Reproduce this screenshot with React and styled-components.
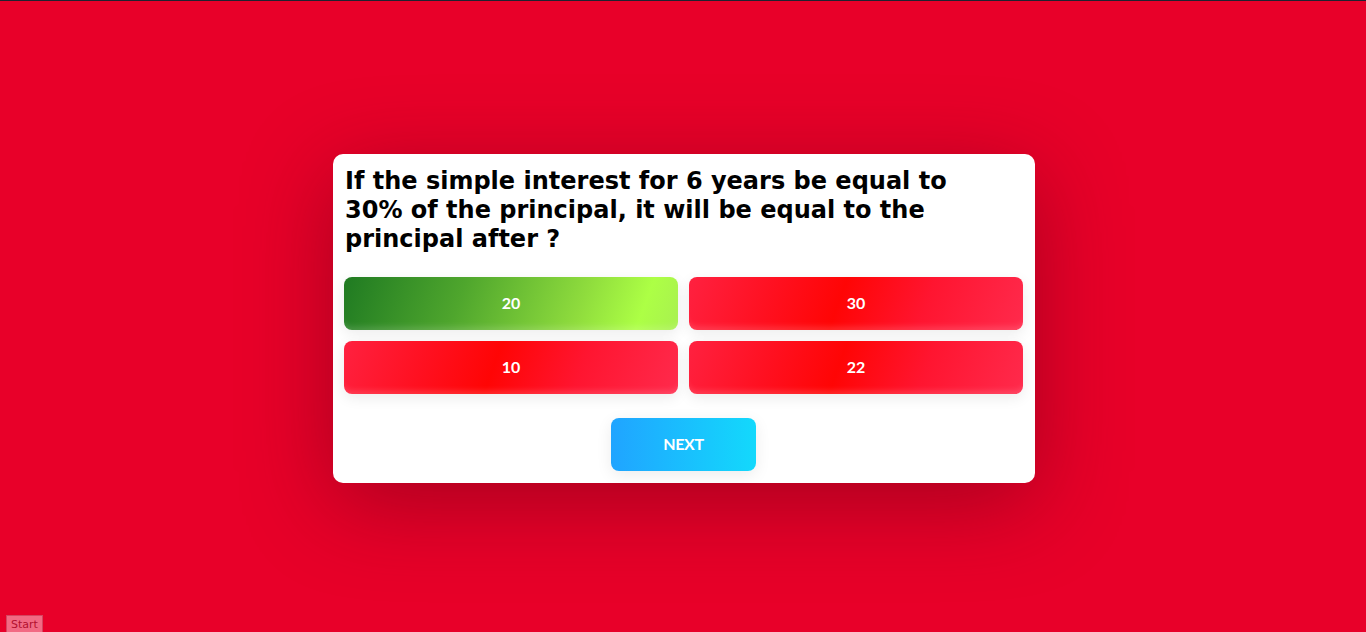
import React from "react";
import styled, { createGlobalStyle } from "styled-components";

const Global = createGlobalStyle`
  html, body { margin: 0; padding: 0; }
  body {
    background: #e80029;
    border-top: 1px solid #1e2230;
    font-family: "Lato", "Noto Sans", sans-serif;
    overflow: hidden;
  }
`;

const Page = styled.div`
  height: 631px;
  display: flex;
  align-items: center;
  justify-content: center;
  background: #e80029;
`;

const Card = styled.div`
  width: 702px;
  box-sizing: border-box;
  background: #fff;
  border-radius: 10px;
  padding: 13px 12px 12px 11px;
  margin: 3px 0 0 2px;
  box-shadow: 0 20px 90px rgba(90, 0, 20, 0.45);
  display: flex;
  flex-direction: column;
`;

const Question = styled.h2`
  margin: 0 0 23px 1px;
  font-family: "DejaVu Sans", Verdana, sans-serif;
  font-weight: bold;
  font-size: 24px;
  line-height: 29px;
  color: #000;
  padding-right: 40px;
`;

const Answers = styled.div`
  display: grid;
  grid-template-columns: 1fr 1fr;
  gap: 11px;
`;

const Answer = styled.button`
  height: 53px;
  border: none;
  border-radius: 8px;
  color: #fff;
  font-family: "Lato", sans-serif;
  font-weight: bold;
  font-size: 16px;
  padding: 0 0 2px;
  cursor: pointer;
  background: ${(p) =>
    p.$correct
      ? "linear-gradient(110deg, #1f7a22 0%, #4fa62d 35%, #8fdc3d 70%, #adff45 88%, #a8f050 100%)"
      : "linear-gradient(110deg, #ff2140 0%, #ff1020 25%, #ff0505 45%, #ff1530 70%, #ff2a4c 100%)"};
  box-shadow: 0 4px 14px rgba(0, 0, 0, 0.08), inset 0 -7px 6px -4px rgba(255, 255, 255, 0.16);
`;

const Footer = styled.div`
  display: flex;
  justify-content: center;
  margin-top: 24px;
`;

const Next = styled.button`
  width: 145px;
  height: 53px;
  border: none;
  border-radius: 8px;
  color: #fff;
  font-family: "Lato", sans-serif;
  font-weight: bold;
  font-size: 16px;
  padding: 0 0 2px;
  text-transform: uppercase;
  letter-spacing: -0.3px;
  background: linear-gradient(to right, #20a4ff, #13d9fc);
  box-shadow: 0 4px 16px rgba(0, 0, 0, 0.08);
  cursor: pointer;
`;

const Start = styled.button`
  position: fixed;
  left: 6px;
  bottom: -2px;
  height: 19px;
  padding: 0 4px;
  border: 1px solid rgba(160, 0, 30, 0.35);
  background: #f26a84;
  color: #b3102e;
  font-family: "DejaVu Sans", sans-serif;
  font-size: 11px;
  line-height: 16px;
  border-radius: 0;
`;

const answers = [
  { text: "20", correct: true },
  { text: "30" },
  { text: "10" },
  { text: "22" },
];

export default function App() {
  return (
    <>
      <Global />
      <Page>
        <Card>
          <Question>
            If the simple interest for 6 years be equal to 30% of the principal, it will be equal to the principal after ?
          </Question>
          <Answers>
            {answers.map((a) => (
              <Answer key={a.text} $correct={a.correct}>
                {a.text}
              </Answer>
            ))}
          </Answers>
          <Footer>
            <Next>Next</Next>
          </Footer>
        </Card>
      </Page>
      <Start>Start</Start>
    </>
  );
}
